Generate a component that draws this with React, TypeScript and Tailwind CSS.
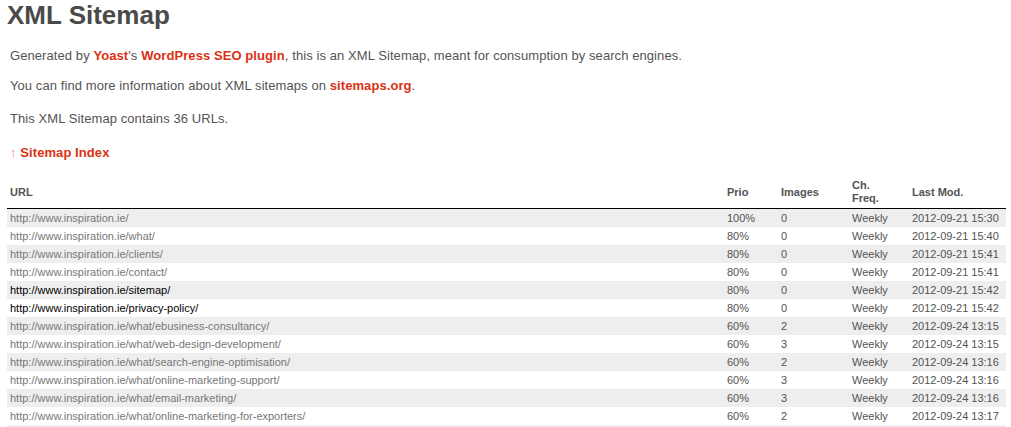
import React from "react";

type Row = { url: string; prio: string; img: string; date: string; dark?: boolean };

const rows: Row[] = [
  { url: "http://www.inspiration.ie/", prio: "100%", img: "0", date: "2012-09-21 15:30" },
  { url: "http://www.inspiration.ie/what/", prio: "80%", img: "0", date: "2012-09-21 15:40" },
  { url: "http://www.inspiration.ie/clients/", prio: "80%", img: "0", date: "2012-09-21 15:41" },
  { url: "http://www.inspiration.ie/contact/", prio: "80%", img: "0", date: "2012-09-21 15:41" },
  { url: "http://www.inspiration.ie/sitemap/", prio: "80%", img: "0", date: "2012-09-21 15:42", dark: true },
  { url: "http://www.inspiration.ie/privacy-policy/", prio: "80%", img: "0", date: "2012-09-21 15:42", dark: true },
  { url: "http://www.inspiration.ie/what/ebusiness-consultancy/", prio: "60%", img: "2", date: "2012-09-24 13:15" },
  { url: "http://www.inspiration.ie/what/web-design-development/", prio: "60%", img: "3", date: "2012-09-24 13:15" },
  { url: "http://www.inspiration.ie/what/search-engine-optimisation/", prio: "60%", img: "2", date: "2012-09-24 13:16" },
  { url: "http://www.inspiration.ie/what/online-marketing-support/", prio: "60%", img: "3", date: "2012-09-24 13:16" },
  { url: "http://www.inspiration.ie/what/email-marketing/", prio: "60%", img: "3", date: "2012-09-24 13:16" },
  { url: "http://www.inspiration.ie/what/online-marketing-for-exporters/", prio: "60%", img: "2", date: "2012-09-24 13:17" },
];

export default function App() {
  return (
    <div
      className="min-h-screen bg-white text-[#545353]"
      style={{ fontFamily: '"Liberation Sans", Arial, sans-serif' }}
    >
      <h1 className="pt-[2px] pl-[7px] text-[26px] leading-[26px] font-bold text-[#4a4a4a]">
        XML Sitemap
      </h1>
      <div className="pl-[10px] text-[13px] leading-[15px] tracking-[0.08px]">
        <p className="mt-[20px]">
          Generated by <a className="font-bold text-[#da3114]">Yoast</a>'s{" "}
          <a className="font-bold text-[#da3114]">WordPress SEO plugin</a>, this is an XML Sitemap, meant for
          consumption by search engines.
        </p>
        <p className="mt-[15px]">
          You can find more information about XML sitemaps on{" "}
          <a className="font-bold text-[#da3114]">sitemaps.org</a>.
        </p>
        <p className="mt-[18px]">This XML Sitemap contains 36 URLs.</p>
        <p className="mt-[19px]">
          <a className="text-[#da3114]">
            <span className="font-normal text-[#e8826f]">↑</span> <span className="font-bold">Sitemap Index</span>
          </a>
        </p>
      </div>
      <div className="mt-[16px] ml-[7px] w-[999px] text-[11px]">
        <div className="grid grid-cols-[717px_54px_71px_60px_97px] items-center border-b border-black font-bold leading-[13px] h-[33px]">
          <div className="px-[3px]">URL</div>
          <div className="px-[3px]">Prio</div>
          <div className="px-[3px]">Images</div>
          <div className="px-[3px]">
            Ch.
            <br />
            Freq.
          </div>
          <div className="px-[3px]">Last Mod.</div>
        </div>
        {rows.map((r, i) => (
          <div
            key={i}
            className={`grid grid-cols-[717px_54px_71px_60px_97px] h-[18px] leading-[18px] ${
              i % 2 === 0 ? "bg-[#eeeeee]" : "bg-white"
            }`}
          >
            <div className={`px-[3px] whitespace-nowrap ${r.dark ? "text-black" : "text-[#777777]"}`}>{r.url}</div>
            <div className="px-[3px]">{r.prio}</div>
            <div className="px-[3px]">{r.img}</div>
            <div className="px-[3px]">Weekly</div>
            <div className="px-[3px] whitespace-nowrap">{r.date}</div>
          </div>
        ))}
        <div className="h-[18px] bg-[#eeeeee]" />
      </div>
    </div>
  );
}
